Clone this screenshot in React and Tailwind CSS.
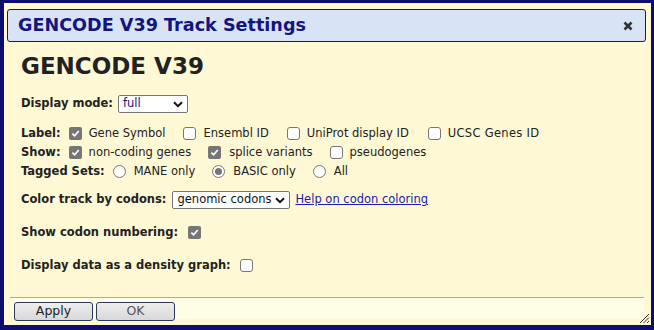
import React from "react";

function Check({ on, className = "" }) {
  return on ? (
    <span
      className={
        "inline-flex w-[13px] h-[13px] shrink-0 items-center justify-center rounded-[2px] bg-[#767676] " +
        className
      }
    >
      <svg width="9" height="9" viewBox="0 0 10 10">
        <path d="M1.5 5.2 L4 7.6 L8.6 2.2" fill="none" stroke="#fff" strokeWidth="1.8" />
      </svg>
    </span>
  ) : (
    <span
      className={
        "inline-block w-[13px] h-[13px] shrink-0 rounded-[3px] border border-[#767676] bg-white " +
        className
      }
    />
  );
}

function Radio({ on, className = "" }) {
  return (
    <span
      className={
        "inline-flex w-[13px] h-[13px] shrink-0 items-center justify-center rounded-full border border-[#767676] bg-white " +
        className
      }
    >
      {on && <span className="w-[7px] h-[7px] rounded-full bg-[#767676]" />}
    </span>
  );
}

function Select({ value, width, textClass = "text-[#111]" }) {
  return (
    <span
      className={
        "inline-flex h-[18px] items-center justify-between rounded-[2px] border border-[#767676] bg-white pl-[4px] pr-[4px] " +
        width
      }
    >
      <span className={"leading-none " + textClass}>{value}</span>
      <svg width="10" height="7" viewBox="0 0 10 7">
        <path d="M1 1.2 L5 5.2 L9 1.2" fill="none" stroke="#111" strokeWidth="2" />
      </svg>
    </span>
  );
}

export default function App() {
  return (
    <div
      className="w-[654px] h-[330px] bg-[#0d0d6e] pl-[4px] pt-[3px] pr-[3px] pb-[5px] text-[11.5px] text-[#222]"
      style={{ fontFamily: '"DejaVu Sans", Verdana, sans-serif' }}
    >
      <div className="flex h-full flex-col bg-[#fff8d4]">
        <div className="ml-[3px] mr-[5px] mt-[6px] flex h-[33px] items-center justify-between rounded-[3px] border border-[#1a1a5a] bg-[#d9e3f6] pl-[10px] pr-[12px]">
          <span className="text-[17.6px] font-bold text-[#14147f]">GENCODE V39 Track Settings</span>
          <svg width="10" height="10" viewBox="0 0 10 10">
            <path d="M1.5 1.5 L8.5 8.5 M8.5 1.5 L1.5 8.5" stroke="#333" strokeWidth="2.6" />
          </svg>
        </div>

        <div className="flex flex-1 flex-col pl-[17px]">
          <h1 className="mt-[10px] h-[28px] text-[23px] font-bold leading-[28px] text-[#222]">GENCODE V39</h1>

          <div className="mt-[15px] flex h-[18px] items-center">
            <b>Display mode:</b>
            <Select value="full" width="w-[70px] ml-[5px]" textClass="text-[#16166e]" />
          </div>

          <div className="mt-[11px] flex flex-col leading-[19px]">
            <div className="flex h-[19px] items-center">
              <b>Label:</b>
              <Check on className="ml-[8px]" />
              <span className="ml-[7px]">Gene Symbol</span>
              <Check className="ml-[17px]" />
              <span className="ml-[8px]">Ensembl ID</span>
              <Check className="ml-[18px]" />
              <span className="ml-[7px]">UniProt display ID</span>
              <Check className="ml-[19px]" />
              <span className="ml-[7px] tracking-[0.3px]">UCSC Genes ID</span>
            </div>
            <div className="flex h-[19px] items-center">
              <b>Show:</b>
              <Check on className="ml-[8px]" />
              <span className="ml-[7px]">non-coding genes</span>
              <Check on className="ml-[17px]" />
              <span className="ml-[8px]">splice variants</span>
              <Check className="ml-[17px]" />
              <span className="ml-[7px]">pseudogenes</span>
            </div>
            <div className="flex h-[19px] items-center">
              <b>Tagged Sets:</b>
              <Radio className="ml-[8px]" />
              <span className="ml-[8px]">MANE only</span>
              <Radio on className="ml-[17px]" />
              <span className="ml-[8px]">BASIC only</span>
              <Radio className="ml-[17px]" />
              <span className="ml-[8px]">All</span>
            </div>
          </div>

          <div className="mt-[10px] flex h-[18px] items-center">
            <b>Color track by codons:</b>
            <Select value="genomic codons" width="w-[118px] ml-[6px]" />
            <a href="#" className="ml-[5px] text-[#1c1ca8] underline">
              Help on codon coloring
            </a>
          </div>

          <div className="mt-[14px] flex h-[19px] items-center">
            <b>Show codon numbering:</b>
            <Check on className="ml-[10px]" />
          </div>

          <div className="mt-[14px] flex h-[19px] items-center">
            <b>Display data as a density graph:</b>
            <Check className="ml-[9px]" />
          </div>
        </div>

        <div className="relative">
          <div className="ml-[6px] mr-[7px] flex h-[22px] items-end gap-[3px] border-t border-[#aaa] bg-[#fffde6] pl-[4px]">
            <button className="mb-[-2px] h-[19px] w-[79px] rounded-[3px] border border-[#2b3a5c] bg-gradient-to-b from-[#eeeeee] to-[#d8d8d8] text-[12.5px] leading-none text-[#222]">
              Apply
            </button>
            <button className="mb-[-2px] h-[19px] w-[79px] rounded-[3px] border border-[#2b3a5c] bg-gradient-to-b from-[#eeeeee] to-[#d8d8d8] text-[12.5px] leading-none text-[#555]">
              OK
            </button>
          </div>
          <div className="h-[6px]" />
          <svg className="absolute right-[1px] bottom-[1px]" width="12" height="12" viewBox="0 0 12 12">
            <path d="M11 2 L2 11 M11 5.5 L5.5 11 M11 9 L9 11" stroke="#333" strokeWidth="1" />
          </svg>
        </div>
      </div>
    </div>
  );
}
